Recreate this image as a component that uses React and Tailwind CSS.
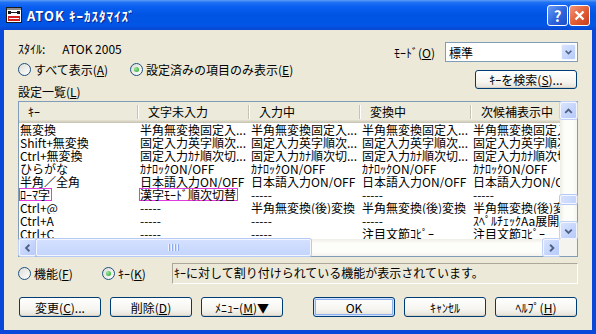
import React from 'react';

const headers = ['ｷｰ', '文字未入力', '入力中', '変換中', '次候補表示中'];

const rows = [
  ['無変換', '半角無変換固定入...', '半角無変換固定入...', '半角無変換固定入...', '半角無変換固定入...'],
  ['Shift+無変換', '固定入力英字順次...', '固定入力英字順次...', '固定入力英字順次...', '固定入力英字順次...'],
  ['Ctrl+無変換', '固定入力ｶﾅ順次切...', '固定入力ｶﾅ順次切...', '固定入力ｶﾅ順次切...', '固定入力ｶﾅ順次切...'],
  ['ひらがな', 'ｶﾅﾛｯｸON/OFF', 'ｶﾅﾛｯｸON/OFF', 'ｶﾅﾛｯｸON/OFF', 'ｶﾅﾛｯｸON/OFF'],
  ['半角／全角', '日本語入力ON/OFF', '日本語入力ON/OFF', '日本語入力ON/OFF', '日本語入力ON/OFF'],
  ['ﾛｰﾏ字', '漢字ﾓｰﾄﾞ順次切替', '-----', '-----', '-----'],
  ['Ctrl+@', '-----', '半角無変換(後)変換', '半角無変換(後)変換', '半角無変換(後)変換'],
  ['Ctrl+A', '-----', '-----', '-----', 'ｽﾍﾟﾙﾁｪｯｸAa展開'],
  ['Ctrl+C', '-----', '-----', '注目文節ｺﾋﾟｰ', '注目文節ｺﾋﾟｰ'],
];

// highlighted cells (row, col)
const marked = ['5-0', '5-1'];

const UP = 'M4.5 10 L8 6.5 L11.5 10';
const DOWN = 'M4.5 6.5 L8 10 L11.5 6.5';
const LEFT = 'M10 4.5 L6.5 8 L10 11.5';
const RIGHT = 'M6.5 4.5 L10 8 L6.5 11.5';

function ScrollBtn({ d }) {
  return (
    <div className="flex h-[17px] w-[17px] items-center justify-center rounded-[2px] border border-[#f3f6fe] bg-[linear-gradient(135deg,#d9e4fe,#c3d4fc_60%,#b7cbf8)] shadow-[0_0_0_1px_#c2d2f6]">
      <svg width="16" height="16" viewBox="0 0 16 16" fill="none">
        <path d={d} stroke="#4d6185" strokeWidth="2" />
      </svg>
    </div>
  );
}

function Radio({ label, k, checked }) {
  return (
    <div className="flex items-center">
      <span className="flex h-[13px] w-[13px] items-center justify-center rounded-full border border-[#1c5180] bg-[linear-gradient(135deg,#dcdcd7,#ffffff)]">
        {checked && (
          <span className="h-[5px] w-[5px] rounded-full bg-[radial-gradient(circle_at_35%_35%,#9be89b,#21a121)]" />
        )}
      </span>
      <span className="ml-[3px] whitespace-nowrap">
        {label}(<span className="underline">{k}</span>)
      </span>
    </div>
  );
}

function Button({ children, main, w = 'w-[82px]', h = 'h-[20px]' }) {
  return (
    <div
      className={`flex ${w} ${h} items-center justify-center whitespace-nowrap rounded-[3px] border border-[#003c74] bg-[linear-gradient(180deg,#ffffff,#f5f4ef_65%,#e4e1d6)] ${
        main ? 'shadow-[inset_0_0_0_1px_#cee0fb,inset_0_0_0_2px_#8fb0f0]' : 'shadow-[inset_0_-1px_0_#d6d0c5]'
      }`}
    >
      {children}
    </div>
  );
}

function AppIcon() {
  return (
    <svg width="16" height="16" viewBox="0 0 16 16">
      <rect x="0.5" y="0.5" width="15" height="15" fill="#ffffff" stroke="#1a1a1a" />
      <rect x="1" y="1" width="14" height="2" fill="#8c8c8c" />
      <rect x="3" y="5" width="10" height="1" fill="#1a1a1a" />
      <rect x="2" y="4" width="3" height="3" fill="#1a1a1a" />
      <rect x="11" y="4" width="3" height="3" fill="#1a1a1a" />
      <rect x="2" y="9" width="12" height="5" fill="#d42020" />
      <rect x="3" y="11" width="10" height="1" fill="#ffffff" />
    </svg>
  );
}

export default function App() {
  return (
    <div className="flex h-[334px] w-[596px] flex-col overflow-hidden bg-[#0a48d9] font-['Noto_Sans_CJK_JP',sans-serif] text-[12px] leading-[13px] text-black">
      {/* title bar */}
      <div className="flex h-[30px] shrink-0 items-center bg-[linear-gradient(180deg,#5d9cf6_0%,#1f72f4_8%,#0a5ff0_22%,#0054e3_50%,#0156e6_85%,#0a46cf_100%)] pl-[6px] pr-[6px]">
        <AppIcon />
        <div className="ml-[5px] flex-1 text-[13px] font-bold tracking-[1px] text-white [text-shadow:1px_1px_0_#0a1e8a]">
          ATOK ｷｰｶｽﾀﾏｲｽﾞ
        </div>
        <div className="flex gap-[1px]">
          <div className="flex h-[21px] w-[21px] items-center justify-center rounded-[3px] border border-white bg-[linear-gradient(135deg,#6b9bf5,#2c63dc_55%,#1d4fc9)] text-[15px] font-bold leading-none text-white">
            ?
          </div>
          <div className="flex h-[21px] w-[21px] items-center justify-center rounded-[3px] border border-white bg-[linear-gradient(135deg,#f3957a,#e15b32_55%,#c63e1d)]">
            <svg width="13" height="13" viewBox="0 0 13 13">
              <path d="M2.5 2.5 L10.5 10.5 M10.5 2.5 L2.5 10.5" stroke="#ffffff" strokeWidth="2.4" />
            </svg>
          </div>
        </div>
      </div>

      {/* client area */}
      <div className="mx-[4px] mb-[4px] flex flex-1 flex-col bg-[#ece9d8] px-[14px]">
        <div className="flex h-[71px] justify-between">
          <div className="flex flex-col pt-[12px]">
            <div className="flex h-[13px] whitespace-nowrap">
              <span>ｽﾀｲﾙ:</span>
              <span className="ml-[17px]">ATOK 2005</span>
            </div>
            <div className="mt-[8px] flex h-[13px]">
              <div className="w-[112px]">
                <Radio label="すべて表示" k="A" />
              </div>
              <Radio label="設定済みの項目のみ表示" k="E" checked />
            </div>
            <div className="mt-[9px]">
              設定一覧(<span className="underline">L</span>)
            </div>
          </div>
          <div className="flex flex-col items-end pt-[12px]">
            <div className="flex h-[20px] items-center">
              <span>
                ﾓｰﾄﾞ(<span className="underline">O</span>)
              </span>
              <div className="ml-[10px] flex h-[20px] w-[133px] items-center justify-between border border-[#7f9db9] bg-white pl-[3px]">
                <span>標準</span>
                <div className="m-[1px] flex h-[16px] w-[15px] items-center justify-center rounded-[2px] border border-[#f3f6fe] bg-[linear-gradient(135deg,#d9e4fe,#c3d4fc_60%,#b7cbf8)]">
                  <svg width="14" height="14" viewBox="0 0 16 16" fill="none">
                    <path d={DOWN} stroke="#4d6185" strokeWidth="2" />
                  </svg>
                </div>
              </div>
            </div>
            <div className="mr-[1px] mt-[8px]">
              <Button w="w-[102px]" h="h-[19px]">
                ｷｰを検索(<span className="underline">S</span>)...
              </Button>
            </div>
          </div>
        </div>

        {/* list view */}
        <div className="grid h-[156px] shrink-0 grid-cols-[541px_17px] grid-rows-[137px_17px] border border-[#7f9db9] bg-white">
          <div className="overflow-hidden">
            <div className="grid h-[21px] grid-cols-[120px_111px_111px_111px_111px] bg-[#ebeadb] shadow-[inset_0_-1px_0_#cbc7b8,inset_0_-2px_0_#d6d2c2,inset_0_-3px_0_#e2decd]">
              {headers.map((h) => (
                <div key={h} className="flex items-center justify-between whitespace-nowrap pb-[2px] pl-[9px]">
                  <span>{h}</span>
                  <span className="h-[14px] w-[2px] border-l border-r border-l-[#c7c5b2] border-r-white" />
                </div>
              ))}
            </div>
            {rows.map((r, i) => (
              <div key={i} className="grid h-[13px] grid-cols-[120px_111px_111px_111px_111px]">
                {r.map((c, j) =>
                  marked.includes(`${i}-${j}`) ? (
                    <div key={j} className="flex overflow-hidden whitespace-nowrap">
                      <span className="h-[13px] border border-[#e03ce0] pr-[1px] leading-[11px]">{c}</span>
                    </div>
                  ) : (
                    <div key={j} className="overflow-hidden whitespace-nowrap pl-[1px]">
                      {c}
                    </div>
                  )
                )}
              </div>
            ))}
          </div>

          {/* vertical scrollbar */}
          <div className="flex flex-col bg-[linear-gradient(90deg,#eeede5,#fdfdfa_25%,#fdfdfa_75%,#f4f3ee)]">
            <ScrollBtn d={UP} />
            <div className="mt-[76px] h-[9px] w-[17px] rounded-[2px] border border-[#f3f6fe] bg-[linear-gradient(90deg,#d4e0fe,#c4d5fd)] shadow-[0_0_0_1px_#b7caf5]" />
            <div className="flex-1" />
            <ScrollBtn d={DOWN} />
          </div>

          {/* horizontal scrollbar */}
          <div className="flex bg-[linear-gradient(180deg,#eeede5,#fdfdfa_25%,#fdfdfa_75%,#f4f3ee)]">
            <ScrollBtn d={LEFT} />
            <div className="flex h-[17px] w-[275px] items-center justify-center gap-[1px] rounded-[2px] border border-[#f3f6fe] bg-[linear-gradient(180deg,#d4e0fe,#c4d5fd)] shadow-[0_0_0_1px_#b7caf5]">
              {[0, 1, 2, 3].map((g) => (
                <span key={g} className="h-[7px] w-[2px] border-l border-r border-l-[#eef3ff] border-r-[#8cabf0]" />
              ))}
            </div>
            <div className="flex-1" />
            <ScrollBtn d={RIGHT} />
          </div>
          <div className="bg-[#f4f3ee]" />
        </div>

        {/* mode radios + status */}
        <div className="mt-[6px] flex h-[21px] items-center">
          <div className="w-[84px]">
            <Radio label="機能" k="F" />
          </div>
          <div className="w-[70px]">
            <Radio label="ｷｰ" k="K" checked />
          </div>
          <div className="h-[21px] flex-1 whitespace-nowrap border border-b-white border-l-[#aca899] border-r-white border-t-[#aca899] px-[1px] pt-[2px]">
            ｷｰに対して割り付けられている機能が表示されています。
          </div>
        </div>

        {/* buttons */}
        <div className="mt-[13px] flex justify-between px-[1px]">
          <div className="flex gap-[9px]">
            <Button>
              変更(<span className="underline">C</span>)...
            </Button>
            <Button>
              削除(<span className="underline">D</span>)
            </Button>
            <Button>
              ﾒﾆｭｰ(<span className="underline">M</span>)▼
            </Button>
          </div>
          <div className="flex gap-[9px]">
            <Button main>OK</Button>
            <Button>ｷｬﾝｾﾙ</Button>
            <Button>
              ﾍﾙﾌﾟ(<span className="underline">H</span>)
            </Button>
          </div>
        </div>
      </div>
    </div>
  );
}
